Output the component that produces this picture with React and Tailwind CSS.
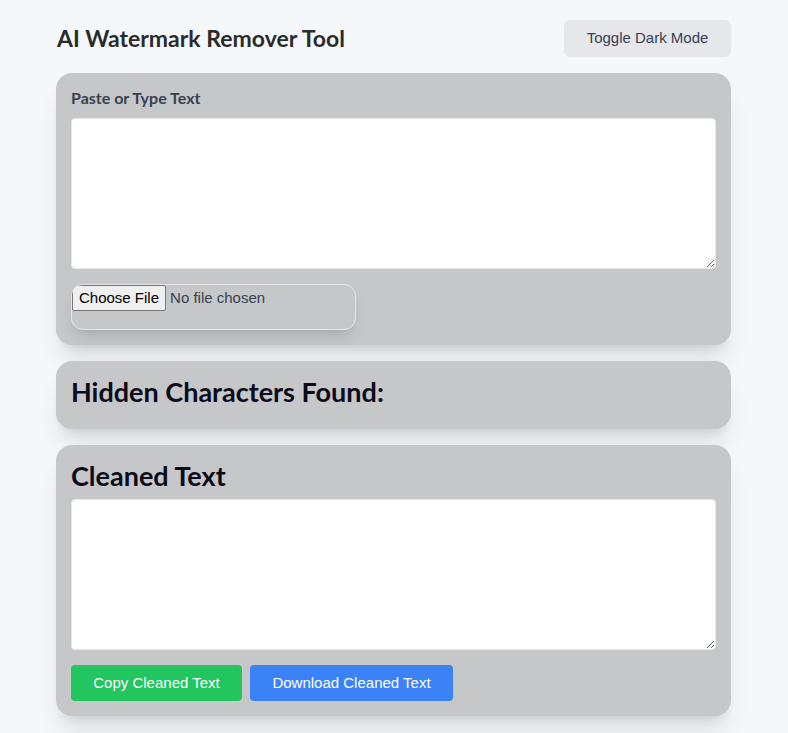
import React from "react";

export default function App() {
  return (
    <div className="min-h-screen bg-[#f5f8fb] pt-5 pb-4 font-['Liberation_Sans',Arial,sans-serif]">
      <div className="w-[675px] ml-[56px]">
        <header className="flex items-center justify-between h-[37px] mb-4">
          <h1 className="font-['Lato',sans-serif] font-bold text-[23px] leading-[37px] text-[#2b2b2b] pl-px">AI Watermark Remover Tool</h1>
          <button className="w-[167px] h-[37px] rounded-md bg-[#e5e7eb] text-[15px] text-[#374151]">Toggle Dark Mode</button>
        </header>

        <section className="rounded-2xl bg-[#c6c7c9] p-[15px] shadow-xl mb-4">
          <label className="block font-['Lato',sans-serif] font-bold text-[16px] leading-[20px] text-[#374151] mb-[10px]">Paste or Type Text</label>
          <textarea className="block w-full h-[151px] bg-white rounded-sm border border-[#e5e7eb] resize-y outline-none" />
          <input
            type="file"
            className="block mt-[15px] w-[285px] h-[46px] rounded-xl border border-[#e5e7eb] text-[15px] text-[#374151] shadow-lg file:mr-[4px] file:h-[26px] file:px-[6px] file:bg-[#efefef] file:border file:border-solid file:border-[#767676] file:rounded-[2px] file:text-black file:text-[15px]"
          />
        </section>

        <section className="rounded-2xl bg-[#c6c7c9] px-[15px] h-[68px] flex items-center shadow-xl mb-4">
          <h2 className="font-['Lato',sans-serif] font-bold text-[27px] leading-[32px] text-[#0b0b19] -mt-[6px]">Hidden Characters Found:</h2>
        </section>

        <section className="rounded-2xl bg-[#c6c7c9] p-[15px] shadow-xl">
          <h2 className="font-['Lato',sans-serif] font-bold text-[27px] leading-[32px] text-[#0b0b19] mb-[7px]">Cleaned Text</h2>
          <textarea className="block w-full h-[151px] bg-white rounded-sm border border-[#e5e7eb] resize-y outline-none" />
          <div className="flex gap-2 mt-[15px]">
            <button className="w-[171px] h-[36px] rounded bg-[#22c55e] text-white text-[15px]">Copy Cleaned Text</button>
            <button className="w-[203px] h-[36px] rounded bg-[#3b82f6] text-white text-[15px]">Download Cleaned Text</button>
          </div>
        </section>
      </div>
    </div>
  );
}
